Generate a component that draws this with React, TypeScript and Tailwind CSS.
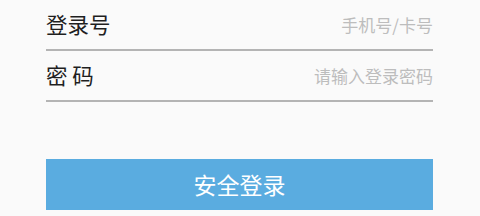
export default function App() {
  return (
    <div className="w-[480px] h-[216px] bg-[#fafafa] overflow-hidden font-['Noto_Sans_CJK_SC','Noto_Sans',sans-serif]">
      <div className="ml-[46px] w-[387px] flex flex-col">
        <div className="h-[51px] flex items-center justify-between border-b-2 border-[#b4b4b4]">
          <span className="text-[21.5px] text-[#1f1f1f]">登录号</span>
          <input
            type="text"
            placeholder="手机号/卡号"
            className="bg-transparent text-right text-[17px] w-[200px] outline-none placeholder:text-[#bdbdbd]"
          />
        </div>
        <div className="h-[51px] flex items-center justify-between border-b-2 border-[#b4b4b4]">
          <span className="text-[21.5px] text-[#1f1f1f]">密 码</span>
          <input
            type="password"
            placeholder="请输入登录密码"
            className="bg-transparent text-right text-[17px] w-[200px] outline-none placeholder:text-[#bdbdbd]"
          />
        </div>
        <button className="mt-[57px] h-[51px] bg-[#5aace0] text-white text-[23px]">安全登录</button>
      </div>
    </div>
  )
}
